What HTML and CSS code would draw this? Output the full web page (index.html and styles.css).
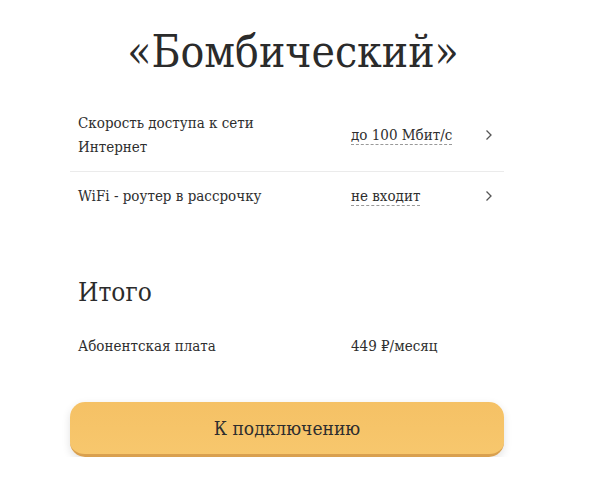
FILE: index.html
```html
<!DOCTYPE html>
<html lang="ru">
<head>
  <meta charset="UTF-8">
  <meta name="viewport" content="width=device-width, initial-scale=1" />
  <title>Бомбический</title>
  <link rel="stylesheet" href="styles.css">
</head>
<body>
  <div class="tariff">
    <h1 class="tariff-title">«Бомбический»</h1>

    <div class="options">
      <div class="option">
        <div class="option-name">Скорость доступа к сети<br>Интернет</div>
        <div class="option-value"><span>до 100 Мбит/с</span></div>
        <svg class="chevron" width="8" height="12" viewBox="0 0 8 12"><path d="M1.5 1.5 L6 6 L1.5 10.5" fill="none" stroke="#555" stroke-width="1.3"/></svg>
      </div>
      <div class="option">
        <div class="option-name">WiFi - роутер в рассрочку</div>
        <div class="option-value"><span>не входит</span></div>
        <svg class="chevron" width="8" height="12" viewBox="0 0 8 12"><path d="M1.5 1.5 L6 6 L1.5 10.5" fill="none" stroke="#555" stroke-width="1.3"/></svg>
      </div>
    </div>

    <h2 class="total-title">Итого</h2>
    <div class="total-row">
      <div class="option-name">Абонентская плата</div>
      <div class="total-price">449 ₽/месяц</div>
    </div>

    <button class="connect-btn">К подключению</button>
  </div>
</body>
</html>
```

FILE: styles.css
```css
body {
  margin: 0;
  background-color: #fff;
  color: #2e2e2e;
  font-family: "DejaVu Serif Condensed", "DejaVu Serif", serif;
}

.tariff {
  width: 434px;
  margin-left: 70px;
}

.tariff-title {
  margin: 0 0 15px;
  padding: 20px 0 0 12px;
  line-height: 64px;
  font-size: 44px;
  font-weight: normal;
  text-align: center;
  color: #2b2b2b;
}

.option {
  display: flex;
  align-items: center;
  padding: 12px 0 12px 8px;
  font-size: 15px;
  line-height: 24px;
}

.option + .option {
  border-top: 1px solid #ebebeb;
}

.option-name {
  width: 273px;
}

.option-value {
  flex: 1;
}

.option-value span {
  border-bottom: 1px dashed #999;
}

.chevron {
  margin-right: 11px;
}

.total-title {
  margin: 56px 0 0 8px;
  font-size: 26px;
  line-height: 32px;
  font-weight: normal;
  color: #2b2b2b;
}

.total-row {
  display: flex;
  margin: 26px 0 0 8px;
  font-size: 15px;
  line-height: 24px;
}

.connect-btn {
  display: block;
  width: 434px;
  height: 55px;
  margin-top: 44px;
  border: none;
  border-bottom: 3px solid #d9a04f;
  border-radius: 15px;
  background: linear-gradient(#f5c165, #f7c76d);
  box-shadow: 0 3px 8px rgba(0, 0, 0, 0.12);
  font-family: inherit;
  font-size: 19px;
  color: #2e2e2e;
  cursor: pointer;
}
```
